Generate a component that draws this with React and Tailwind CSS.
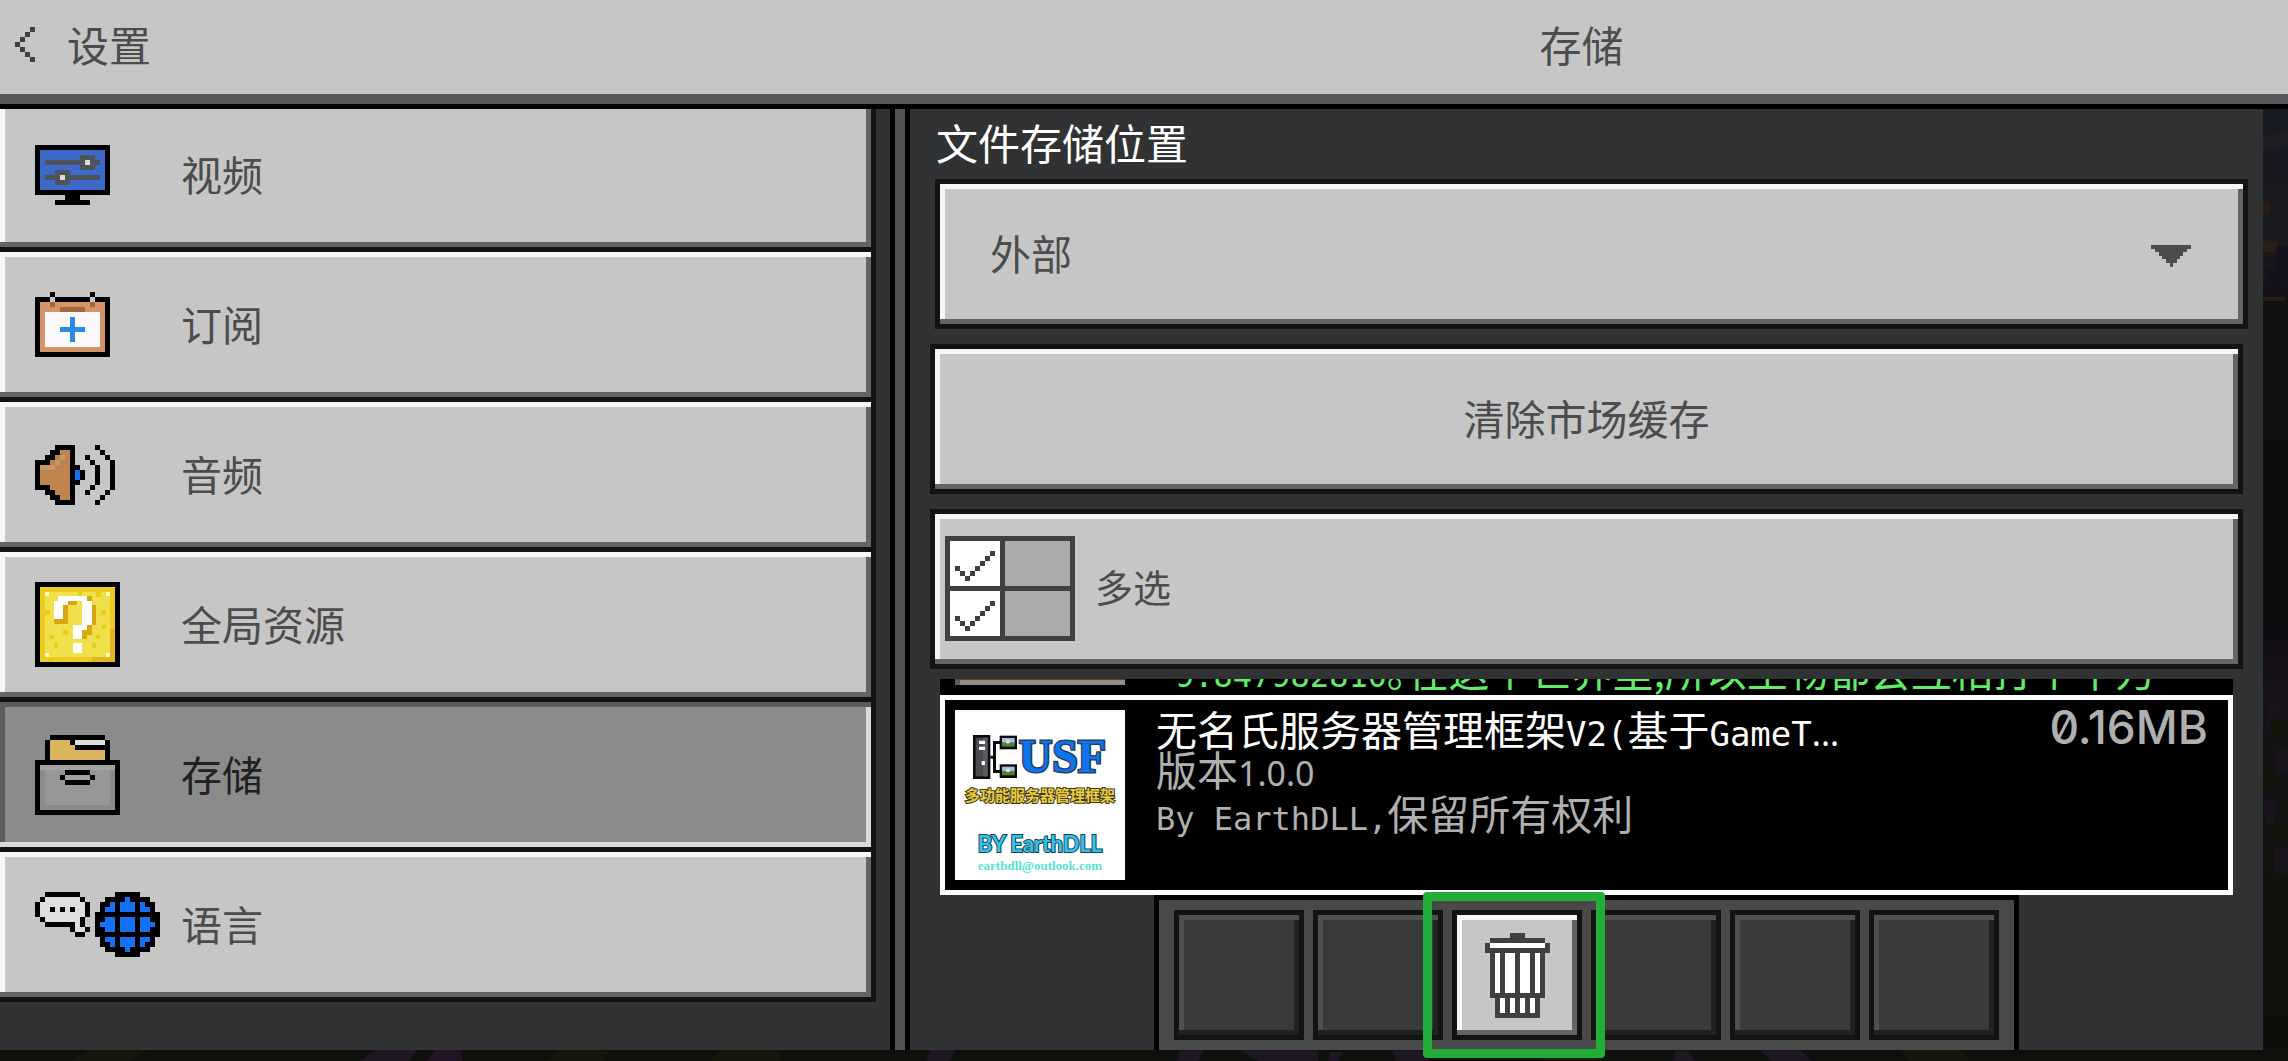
import React from "react";

const PALETTE = {
  K: "#000000",
  B: "#3d6ac9",
  G: "#4f545c",
  W: "#dedede",
  O: "#d4936a",
  N: "#a8683f",
  C: "#fafafa",
  P: "#2a8ae6",
  A: "#c6c6c6",
  T: "#bd8450",
  U: "#c89568",
  L: "#1471f5",
  Y: "#dab55e",
  D: "#8b8b8b",
  E: "#979797",
  F: "#a3a3a3",
  S: "#404040",
  X: "#ffffff",
};

function PixelArt({ rows, className = "" }) {
  const w = rows[0].length;
  const h = rows.length;
  const rects = [];
  rows.forEach((row, y) => {
    let x = 0;
    while (x < row.length) {
      const c = row[x];
      let end = x + 1;
      while (end < row.length && row[end] === c) end++;
      if (c !== ".") {
        rects.push(<rect key={`${x}-${y}`} x={x} y={y} width={end - x} height={1} fill={PALETTE[c]} />);
      }
      x = end;
    }
  });
  return (
    <svg aria-hidden="true" viewBox={`0 0 ${w} ${h}`} width={w * 5} height={h * 5} shapeRendering="crispEdges" className={`shrink-0 ${className}`}>
      {rects}
    </svg>
  );
}

const BACK = ["...S", "..S.", ".S..", "S...", ".S..", "..S.", "...S"];

const MONITOR = [
  "KKKKKKKKKKKKKKK",
  "KBBBBBBBBBBBBBK",
  "KBBBBBBBBGGGBBK",
  "KBGGGGGGGGWGGBK",
  "KBBBBBBBBGGGBBK",
  "KBBBGGGBBBBBBBK",
  "KBGGGWGGGGGGGBK",
  "KBBBGGGBBBBBBBK",
  "KBBBBBBBBBBBBBK",
  "KKKKKKKKKKKKKKK",
  "......KKK......",
  "....KKKKKKK....",
];

const CALENDAR = [
  "...K.......K...",
  "KKKAKKKKKKKAKKK",
  "KOONOOOOOOONOOK",
  "KOOOONNNNNOOOOK",
  "KOCCCCCCCCCCCOK",
  "KOCCCCCPCCCCCOK",
  "KOCCCCCPCCCCCOK",
  "KOCCCPPPPPCCCOK",
  "KOCCCCCPCCCCCOK",
  "KOCCCCCPCCCCCOK",
  "KOCCCCCCCCCCCOK",
  "KOOOOOOOOOOOOOK",
  "KKKKKKKKKKKKKKK",
];

const SPEAKER = [
  "....KKKK....K...",
  "...KKTTK.....K..",
  "..KKTUTK..K...K.",
  "KKKTUTTK...K...K",
  "KUUUTTTKK...K..K",
  "KTTTTTTKLK..K..K",
  "KTTTTTTKLK..K..K",
  "KTTTTTTKK...K..K",
  "KKKTTTTK...K...K",
  "..KKTTTK..K...K.",
  "...KKTTK.....K..",
  "....KKKK....K...",
];

const CABINET = [
  "...KKKKKKKKKKK...",
  "..KYYYYKWWWWWWK..",
  "..KYYYYYKKKKKKK..",
  "..KYYYYYYYYYYYK..",
  "..KYYYYYYYYYYYK..",
  "KKKKKKKKKKKKKKKKK",
  "KFFFFFFFFFFFFFFFK",
  "KDEEEEKKKKKEEEEDK",
  "KDEEEKFFFFFKEEEDK",
  "KDEEEEKKKKKEEEEDK",
  "KDEEEEEEEEEEEEEDK",
  "KDEEEEEEEEEEEEEDK",
  "KDEEEEEEEEEEEEEDK",
  "KDEEEEEEEEEEEEEDK",
  "KDDDDDDDDDDDDDDDK",
  "KKKKKKKKKKKKKKKKK",
];

const LANGUAGE = [
  "..KKKKKKK.......KKKKK....",
  ".KWWWWWWWK....KKKKLKKKK..",
  "KWWWWWWWWWK..KKLKLLLKLKK.",
  "KWWKWKWKWWK..KLLKLLLKLLK.",
  "KWWWWWWWWWK.KKKKKKKKKKKKK",
  ".KWWWWWWWK..KKLLKLLLKLLKK",
  "..KKKKKKWK..KLLLKLLLKLLLK",
  ".......KWWK.KKLLKLLLKLLKK",
  "........KK..KKKKKKKKKKKKK",
  ".............KLLKLLLKLLK.",
  ".............KKLKLLLKLKK.",
  "..............KKKKLKKKK..",
  "................KKKKK....",
];

const TRASH = [
  ".....SSS.....",
  ".SSSSSSSSSSS.",
  "SXXXXXXXXXXXS",
  "SSSSSSSSSSSSS",
  ".SXSXXSXXSXS.",
  ".SXSXXSXXSXS.",
  ".SXSXXSXXSXS.",
  ".SXSXXSXXSXS.",
  ".SXSXXSXXSXS.",
  ".SXSXXSXXSXS.",
  ".SXSXXSXXSXS.",
  ".SXSXXSXXSXS.",
  ".SSSSSSSSSSS.",
  "..SXSXSXSXS..",
  "..SXSXSXSXS..",
  "..SXSXSXSXS..",
  "..SSSSSSSSS..",
];

function QuestionBlock() {
  const specks = [
    [30, 84], [198, 84], [200, 128], [182, 158], [84, 144], [56, 184], [170, 184], [128, 30], [184, 30], [42, 158],
  ];
  return (
    <svg aria-hidden="true" viewBox="0 0 255 255" width="85" height="85" shapeRendering="crispEdges" className="shrink-0">
      <rect width="255" height="255" fill="#000" />
      <rect x="15" y="15" width="225" height="225" fill="#ebcb22" />
      <rect x="29" y="29" width="197" height="197" fill="#f1df4b" />
      <rect x="226" y="140" width="14" height="100" fill="#e5b422" />
      <rect x="170" y="226" width="70" height="14" fill="#e5b422" />
      {specks.map(([x, y]) => (
        <rect key={`${x}-${y}`} x={x} y={y} width="14" height="14" fill="#e6cf1c" />
      ))}
      <g fill="#fffcc0">
        <rect x="30" y="30" width="12" height="12" />
        <rect x="213" y="30" width="12" height="12" />
        <rect x="30" y="213" width="12" height="12" />
        <rect x="213" y="213" width="12" height="12" />
      </g>
      <path fill="#d9a60f" d="M155 42h15v28h14v60h-14v28h-15v14h-14v-42h14zM98 56h29v14h-29v56h-41v-14h28V70h13z" />
      <path fill="#fff" d="M70 42h85v14h15v73h-14v14h-15v27h-28v-41h28V56H98v14H85v42H57V56h13zM113 184h28v28h-28z" />
    </svg>
  );
}

function CheckGrid() {
  const mark = [[2, 6], [3, 7], [4, 8], [5, 7], [6, 6], [7, 5], [8, 4], [9, 3]];
  return (
    <svg aria-hidden="true" viewBox="0 0 26 21" width="130" height="105" shapeRendering="crispEdges" className="shrink-0">
      <rect width="26" height="21" fill="#404040" />
      {[0, 10].map((dy) => (
        <g key={dy}>
          <rect x="1" y={1 + dy} width="10" height="9" fill="#fff" />
          <rect x="12" y={1 + dy} width="13" height="9" fill="#ababab" />
          {mark.map(([x, y]) => (
            <rect key={x} x={x} y={y + dy} width="1" height="1" fill="#404040" />
          ))}
        </g>
      ))}
    </svg>
  );
}

function ServerLogo() {
  return (
    <svg aria-hidden="true" viewBox="0 0 132 132" width="44" height="44" className="shrink-0">
      <rect width="52" height="132" fill="#0b0b0b" />
      <rect x="8" y="8" width="36" height="116" fill="#4b4a4f" />
      <rect x="30" y="8" width="14" height="116" fill="#5d5b61" />
      <path fill="#fff" d="M18 17h18v10H18zM18 35h18v10H18zM26 78h10v12H26z" />
      <path fill="#0b0b0b" d="M52 62h8V18h22v9H69v78h13v9H60V71h-8z" />
      {[2, 88].map((y) => (
        <g key={y}>
          <rect x="80" y={y} width="52" height="41" fill="#0b0b0b" />
          <rect x="87" y={y + 7} width="38" height="15" fill="#9dbdee" />
          <rect x="87" y={y + 20} width="38" height="13" fill="#4c8232" />
          <rect x="100" y={y + 13} width="10" height="10" fill="#f3efb0" />
        </g>
      ))}
    </svg>
  );
}

const navItems = [
  { label: "视频", icon: <PixelArt rows={MONITOR} /> },
  { label: "订阅", icon: <PixelArt rows={CALENDAR} /> },
  { label: "音频", icon: <PixelArt rows={SPEAKER} /> },
  { label: "全局资源", icon: <QuestionBlock /> },
  { label: "存储", icon: <PixelArt rows={CABINET} />, selected: true },
  { label: "语言", icon: <PixelArt rows={LANGUAGE} /> },
];

const RAISED =
  "bg-[#c6c6c6] text-[#4c4c4c] shadow-[inset_0_5px_0_#f6f6f6,inset_-5px_0_0_#656465,inset_0_-5px_0_#656465,inset_5px_0_0_#f6f6f6]";
const PRESSED =
  "bg-[#8b8b8b] text-[#202020] shadow-[inset_0_5px_0_#5b5b5b,inset_-5px_0_0_#d9d9d9,inset_0_-5px_0_#d9d9d9,inset_5px_0_0_#5b5b5b]";
const SLOT =
  "bg-[#3a3a3a] shadow-[inset_0_5px_0_#4f4f4f,inset_-5px_0_0_#212121,inset_0_-5px_0_#212121,inset_5px_0_0_#4f4f4f]";

function Mono({ children, large }) {
  return (
    <span className={`font-['DejaVu_Sans_Mono',monospace] leading-none ${large ? "text-[34px]" : "text-[32px]"}`}>
      {children}
    </span>
  );
}

function Sans({ children }) {
  return <span className="font-['Noto_Sans',sans-serif] text-[34px] leading-none">{children}</span>;
}

function NavItem({ label, icon, selected }) {
  return (
    <li>
      <button
        type="button"
        aria-current={selected ? "page" : undefined}
        className={`flex h-[150px] w-full items-center border-r-5 border-b-5 border-[#131313] pt-[5px] pb-[5px] pl-[35px] text-left text-[41px] ${selected ? PRESSED : RAISED}`}
      >
        <span className="flex w-[146px] shrink-0 items-center">{icon}</span>
        <span className="pb-1">{label}</span>
      </button>
    </li>
  );
}

function PackThumb() {
  return (
    <div className="flex h-[170px] w-[170px] shrink-0 flex-col bg-white pt-6">
      <div className="flex h-[46px] items-center gap-0.5 pl-[18px]">
        <ServerLogo />
        <span className="font-['Liberation_Serif',serif] text-[46px] leading-[46px] font-bold text-[#0f74ef] [-webkit-text-stroke:3px_#26405f] [paint-order:stroke_fill]">
          USF
        </span>
      </div>
      <span className="text-center text-[15px] leading-[30px] font-bold text-[#e8cd45] [-webkit-text-stroke:2px_#40370f] [paint-order:stroke_fill]">
        多功能服务器管理框架
      </span>
      <span className="mt-5 text-center font-['Lato',sans-serif] text-[22px] leading-[28px] font-bold text-[#35c3ea] [-webkit-text-stroke:2px_#143f52] [paint-order:stroke_fill]">
        BY EarthDLL
      </span>
      <span className="text-center font-['Liberation_Serif',serif] text-[13px] leading-[16px] font-bold text-[#55e4d3]">
        earthdll@outlook.com
      </span>
    </div>
  );
}

function SceneRight() {
  return (
    <svg aria-hidden="true" viewBox="0 0 25 941" preserveAspectRatio="none" className="h-full w-full">
      <defs>
        <linearGradient id="dusk" x1="0" y1="0" x2="0" y2="1">
          <stop offset="0" stopColor="#161a22" />
          <stop offset="0.14" stopColor="#1b191e" />
          <stop offset="0.22" stopColor="#100f0e" />
          <stop offset="0.55" stopColor="#0f0c10" />
          <stop offset="0.62" stopColor="#17121a" />
          <stop offset="0.8" stopColor="#10120d" />
          <stop offset="1" stopColor="#0d0f0b" />
        </linearGradient>
      </defs>
      <rect width="25" height="941" fill="url(#dusk)" />
      <path fill="#1f1f21" d="M0 28l25-9v16L0 43z" />
      <path fill="#2c1c15" d="M0 94h8l-2 11H0zM0 132h15l-3 11H0zM0 188h23l-2 4H0z" />
      <path fill="#15111c" d="M15 137h10v30H10zM5 160l20 6-6 20H2z" />
      <path fill="#19131e" d="M4 590h12v28H4zM14 640h11v24H14zM2 690h10v26H2zM12 740h13v24H12z" />
      <path fill="#101508" d="M8 610h14v18H8zM0 662h12v18H0zM10 715h12v16H10z" />
    </svg>
  );
}

function SceneBottom() {
  return (
    <svg aria-hidden="true" viewBox="0 0 2288 11" preserveAspectRatio="none" className="h-[11px] w-full">
      <rect width="2288" height="11" fill="#0e100b" />
      <path fill="#1e1723" d="M375 0h43l-10 11h-48zM930 0h26l-7 11h-22zM1180 0h24l-6 11h-22zM1240 0h78v11h-60zM1392 0h30l8 11h-34zM1676 0h10l10 11h-24zM1760 0h40l12 11h-40z" />
      <path fill="#13170c" d="M90 0h60l-20 11H70zM560 0h50l-6 11h-60zM720 0h60v11h-70zM1540 0h50l10 11h-60zM1900 0h60l10 11h-60z" />
      <path fill="#231326" d="M436 0h26v11h-36zM1330 2h12l-4 9h-10z" />
    </svg>
  );
}

const COLS = "grid grid-cols-[890fr_20px_1353fr_25px]";

export default function App() {
  return (
    <div className="flex min-h-screen flex-col bg-[#0e100b] font-['Noto_Sans_CJK_SC',sans-serif] text-[42px] leading-[48px] text-[#4c4c4c]">
      <header className={`${COLS} h-[109px] border-b-5 border-black bg-[#c6c6c6] shadow-[inset_0_-10px_0_#58585a]`}>
        <div className="flex items-center pb-4 pl-[15px]">
          <button type="button" aria-label="返回" className="flex w-[52px] items-center">
            <PixelArt rows={BACK} />
          </button>
          <h2>设置</h2>
        </div>
        <div />
        <h1 className="flex items-center justify-center pr-[10px] pb-4">存储</h1>
      </header>

      <main className={`${COLS} flex-1`}>
        <nav aria-label="设置" className="overflow-hidden bg-[#313233] pr-[14px]">
          <ul className="-mt-[7px]">
            {navItems.map((item) => (
              <NavItem key={item.label} {...item} />
            ))}
          </ul>
        </nav>

        <div className="border-x-5 border-black bg-[#535355]" />

        <section className="flex min-w-0 flex-col bg-[#313233] px-5">
          <label htmlFor="location" className="flex h-[70px] items-center pb-1 pl-[6px] text-white">
            文件存储位置
          </label>
          <div className="relative -mr-[5px] ml-[5px]">
            <select
              id="location"
              className={`block h-[150px] w-full appearance-none border-5 border-[#131313] pb-1 pl-[50px] text-[41px] ${RAISED}`}
            >
              <option>外部</option>
            </select>
            <svg
              aria-hidden="true"
              viewBox="0 0 40 22"
              width="40"
              height="22"
              shapeRendering="crispEdges"
              className="pointer-events-none absolute top-[66px] right-[57px]"
            >
              <path fill="#4c4c4c" d="M0 0h40v4h-4v3h-4v4h-3v3h-3v4h-4v4h-3v-4h-4v-4h-4v-3H8V7H4V4H0z" />
            </svg>
          </div>

          <button type="button" className={`mt-[15px] h-[150px] w-full border-5 border-[#131313] pb-1 text-[41px] ${RAISED}`}>
            清除市场缓存
          </button>

          <button
            type="button"
            className={`mt-[15px] flex h-[160px] w-full items-center gap-5 border-5 border-[#131313] pb-0.5 pl-[10px] text-left text-[38px] ${RAISED}`}
          >
            <CheckGrid />
            <span className="pb-1">多选</span>
          </button>

          <ul className="mt-[10px] mr-[10px] ml-[10px] text-[41px]">
            <li className="flex h-4 justify-start overflow-hidden bg-black pl-[15px]">
              <div className="h-[6px] w-[170px] shrink-0 border-t border-l-5 border-t-[#5c4030] border-l-[#5f5955] bg-[#968d8a]" />
              <div className="flex h-4 items-end overflow-hidden pl-[50px] leading-[52px] whitespace-nowrap text-[#5fee66]">
                <p>
                  <Mono>9.847982810</Mono>｡在这个世界里,所以生物都会互相打个千万
                </p>
              </div>
            </li>
            <li className="flex h-[200px] items-start border-5 border-white bg-black p-[10px]">
              <PackThumb />
              <div className="-mt-0.5 min-w-0 flex-1 pl-[31px] leading-[40px] whitespace-nowrap text-[#b0b0b0]">
                <h3 className="h-10 text-white">
                  无名氏服务器管理框架<Mono large>V2(</Mono>基于<Mono large>GameT</Mono>
                  <Sans>...</Sans>
                </h3>
                <p className="h-10">
                  版本<Sans>1.0.0</Sans>
                </p>
                <p className="mt-1 h-10">
                  <Mono>By EarthDLL,</Mono>保留所有权利
                </p>
              </div>
              <span className="pr-[10px] font-['Inter',sans-serif] text-[46px] leading-[34px] font-medium text-[#b0b0b0] slashed-zero">
                0.16MB
              </span>
            </li>
          </ul>

          <div className="flex gap-[9px] self-center border-x-5 border-t-5 border-black bg-[#494949] px-[15px] pt-[10px] pb-[10px]">
            {[0, 1, 2, 3, 4, 5].map((i) =>
              i === 2 ? (
                <div key={i} className="relative">
                  <button
                    type="button"
                    aria-label="删除"
                    className={`flex h-[130px] w-[130px] items-center justify-center border-5 border-[#131313] ${RAISED}`}
                  >
                    <PixelArt rows={TRASH} />
                  </button>
                  <div className="pointer-events-none absolute -top-[18px] -right-[23px] -bottom-[18px] -left-[29px] z-10 rounded-[4px] border-9 border-[#22ad38]" />
                </div>
              ) : (
                <button
                  key={i}
                  type="button"
                  disabled
                  aria-label={`空槽 ${i + 1}`}
                  className={`h-[130px] w-[130px] border-5 border-[#131313] ${SLOT}`}
                />
              )
            )}
          </div>
        </section>

        <div className="relative overflow-hidden">
          <div className="absolute inset-0">
            <SceneRight />
          </div>
        </div>
      </main>

      <footer className="h-[11px]">
        <SceneBottom />
      </footer>
    </div>
  );
}
